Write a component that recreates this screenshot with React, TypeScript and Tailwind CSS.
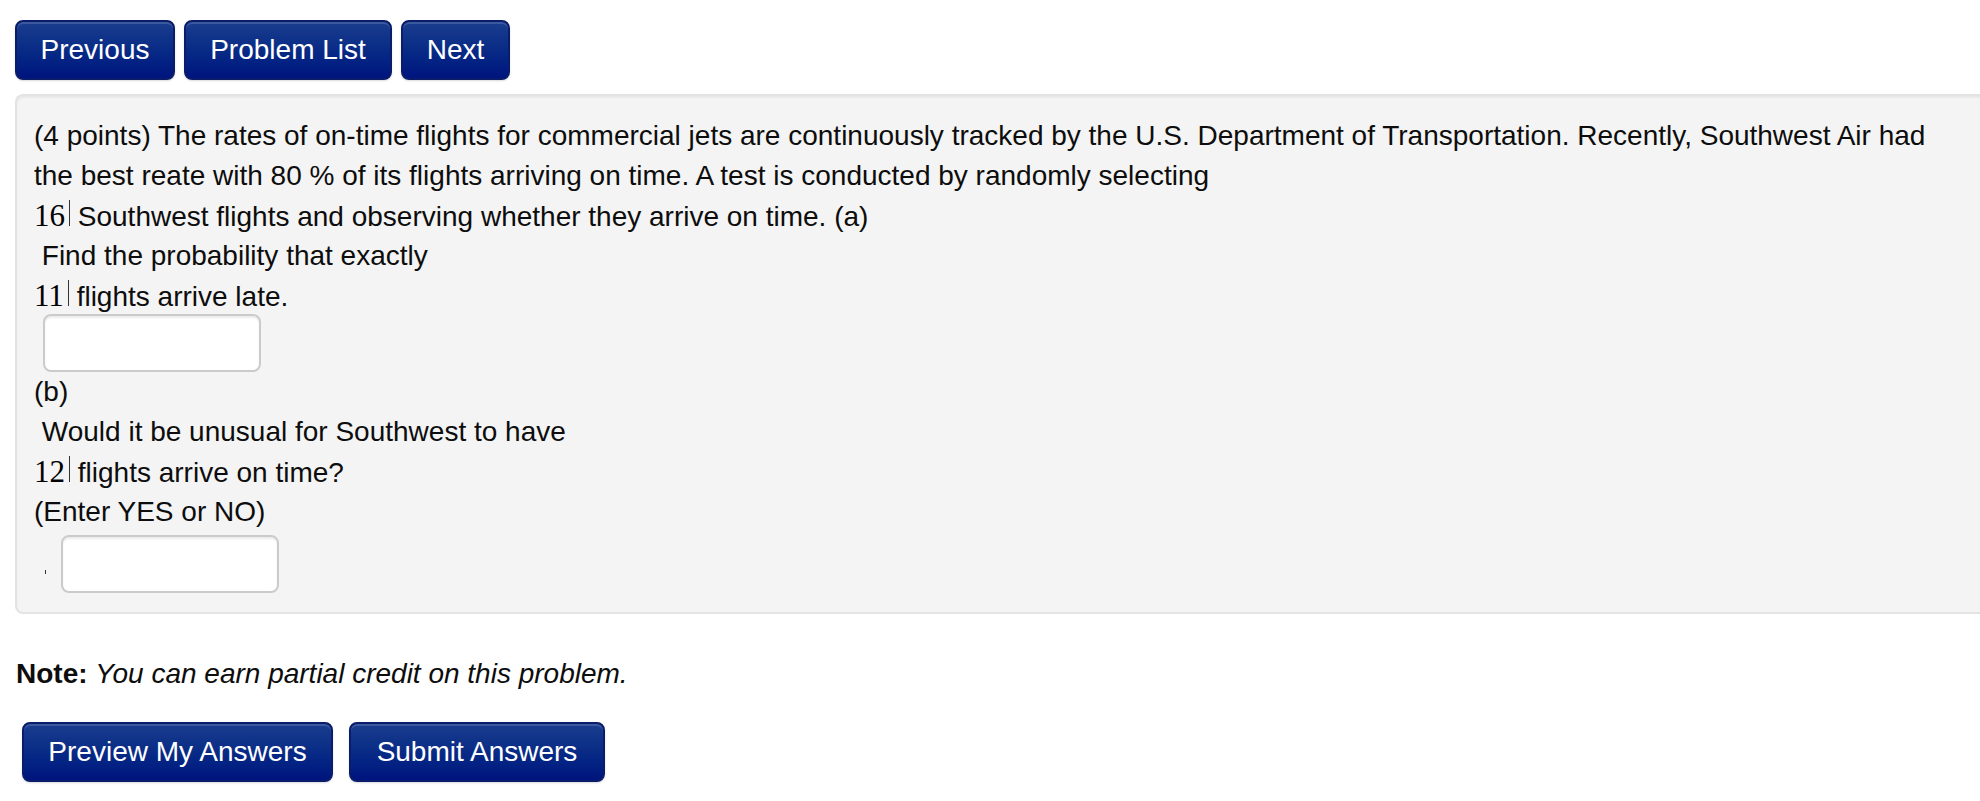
import React from 'react';

const NavButton = ({ label, width }: { label: string; width: string }) => {
  return (
    <button
      className={`${width} h-[60px] rounded-[8px] border-2 border-[#0a1d6b] bg-gradient-to-b from-[#1a3d8e] to-[#00137e] text-center text-[28px] leading-[40px] text-white shadow-[inset_0_2px_0_rgba(255,255,255,0.15),0_1px_2px_rgba(0,0,0,0.15)]`}
    >
      {label}
    </button>
  );
};

const MathNum = ({ n }: { n: string }) => {
  return (
    <>
      <span className="font-['Liberation_Serif','Times_New_Roman',serif] text-[31px] text-black">{n}</span>
      <span className="ml-[4px] inline-block h-[26px] w-px bg-[#333]" />
    </>
  );
};

const AnswerBox = () => {
  return (
    <input
      type="text"
      className="h-[58px] w-[218px] rounded-[8px] border-2 border-[#cbcbcb] bg-white shadow-[inset_0_2px_2px_rgba(0,0,0,0.08)] outline-none"
    />
  );
};

const Line = ({ children }: { children: React.ReactNode }) => {
  return <div className="h-[40px] whitespace-nowrap">{children}</div>;
};

export default function App() {
  return (
    <div className="min-h-screen bg-white font-['Liberation_Sans',Arial,Helvetica,sans-serif] text-[28px] leading-[40px] text-[#0d0d0d]">
      <div className="flex gap-[9px] pl-[15px] pt-[20px]">
        <NavButton label="Previous" width="w-[160px]" />
        <NavButton label="Problem List" width="w-[208px]" />
        <NavButton label="Next" width="w-[109px]" />
      </div>

      <div className="ml-[15px] mt-[14px] rounded-l-[8px] border-2 border-r-0 border-[#e3e3e3] bg-[#f4f4f4] pb-[19px] pl-[17px] pt-[20px] shadow-[inset_0_2px_2px_rgba(0,0,0,0.05)]">
        <Line>
          (4 points) The rates of on-time flights for commercial jets are continuously tracked by the U.S. Department of
          Transportation. Recently, Southwest Air had
        </Line>
        <Line>
          the best reate with 80 % of its flights arriving on time. A test is conducted by randomly selecting
        </Line>
        <Line>
          <MathNum n="16" /> Southwest flights and observing whether they arrive on time. (a)
        </Line>
        <Line>{'\u00a0'}Find the probability that exactly</Line>
        <Line>
          <MathNum n="11" /> flights arrive late.
        </Line>
        <div className="-mt-[2px] flex pl-[9px]">
          <AnswerBox />
        </div>
        <Line>(b)</Line>
        <Line>{'\u00a0'}Would it be unusual for Southwest to have</Line>
        <Line>
          <MathNum n="12" /> flights arrive on time?
        </Line>
        <Line>(Enter YES or NO)</Line>
        <div className="mt-[3px] flex items-start pl-[11px]">
          <span className="mt-[35px] h-[4px] w-px bg-[#333]" />
          <div className="ml-[15px]">
            <AnswerBox />
          </div>
        </div>
      </div>

      <p className="mt-[40px] pl-[16px]">
        <b>Note:</b> <i>You can earn partial credit on this problem.</i>
      </p>

      <div className="mt-[28px] flex gap-[16px] pl-[22px]">
        <NavButton label="Preview My Answers" width="w-[311px]" />
        <NavButton label="Submit Answers" width="w-[256px]" />
      </div>
    </div>
  );
}
